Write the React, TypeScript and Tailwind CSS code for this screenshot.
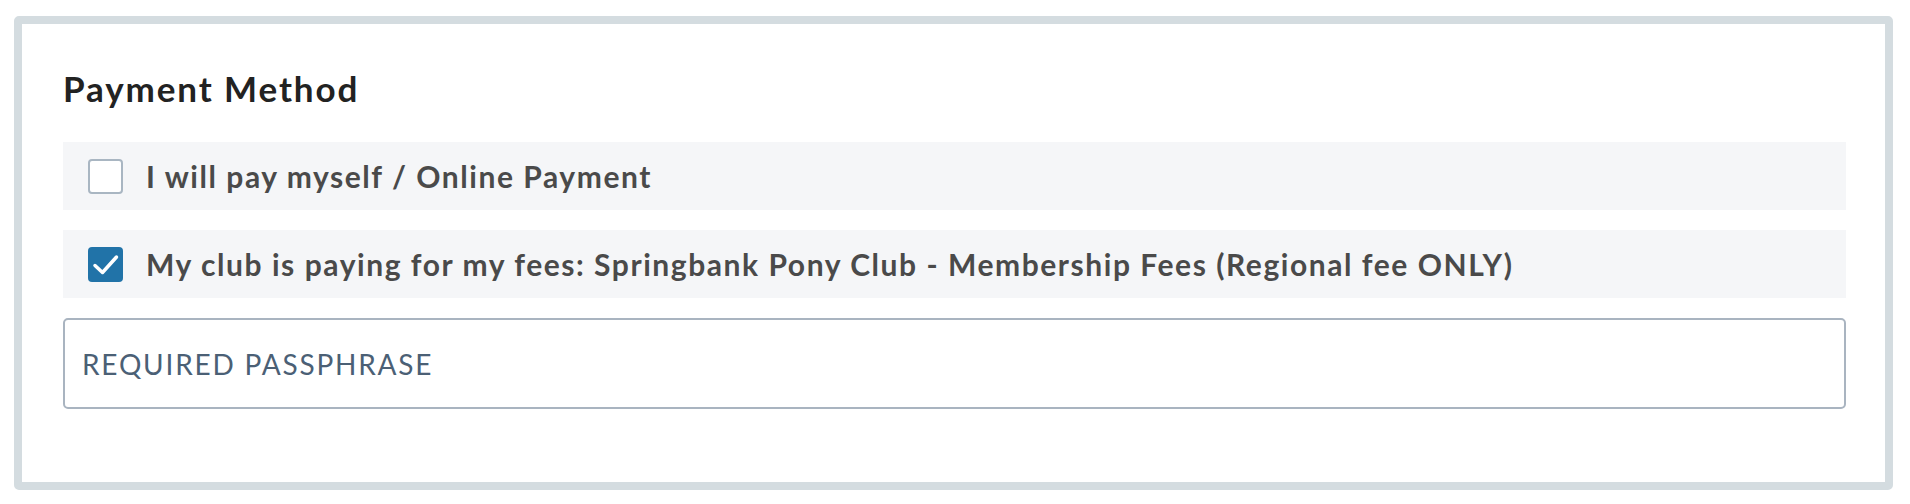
import React, { useState } from 'react';

const font = { fontFamily: 'Lato, "Noto Sans", sans-serif' };

const CheckRow: React.FC<{ label: string; checked: boolean; onToggle: () => void }> = ({
  label,
  checked,
  onToggle,
}) => (
  <label className="flex h-[68px] cursor-pointer items-center bg-[#f5f6f8] pl-[25px]">
    <span
      onClick={onToggle}
      className={`flex h-[35px] w-[35px] shrink-0 items-center justify-center rounded-[4px] ${
        checked ? 'bg-[#2173a8]' : 'border-2 border-[#a9b6c2] bg-white'
      }`}
    >
      {checked && (
        <svg width="35" height="35" viewBox="0 0 35 35" fill="none">
          <path
            d="M7 18.5L14.5 25.5L28.5 10"
            stroke="white"
            strokeWidth="3.5"
            strokeLinecap="round"
            strokeLinejoin="round"
          />
        </svg>
      )}
    </span>
    <span className="ml-[23px] text-[30px] font-bold tracking-[1.55px] text-[#4a4a4a]">{label}</span>
  </label>
);

export default function App() {
  const [selfPay, setSelfPay] = useState(false);
  const [clubPay, setClubPay] = useState(true);

  return (
    <div className="h-[504px] w-[1910px] bg-white pt-[16px] pl-[14px]" style={font}>
      <div className="h-[474px] w-[1879px] rounded-[5px] border-8 border-[#d4dce0] bg-white pl-[41px] pr-[39px]">
        <h2 className="mt-[42px] h-[76px] text-[35px] leading-[44px] font-bold tracking-[1.9px] text-[#222222]">
          Payment Method
        </h2>

        <div className="flex flex-col gap-[20px]">
          <CheckRow
            label="I will pay myself / Online Payment"
            checked={selfPay}
            onToggle={() => setSelfPay(!selfPay)}
          />
          <CheckRow
            label="My club is paying for my fees: Springbank Pony Club - Membership Fees (Regional fee ONLY)"
            checked={clubPay}
            onToggle={() => setClubPay(!clubPay)}
          />
          <input
            type="text"
            placeholder="REQUIRED PASSPHRASE"
            className="h-[91px] w-full rounded-[5px] border-2 border-[#a9b4c0] bg-white px-[17px] text-[28px] tracking-[1.8px] text-[#4b6075] outline-none placeholder:text-[#4b6075]"
            style={font}
          />
        </div>
      </div>
    </div>
  );
}
